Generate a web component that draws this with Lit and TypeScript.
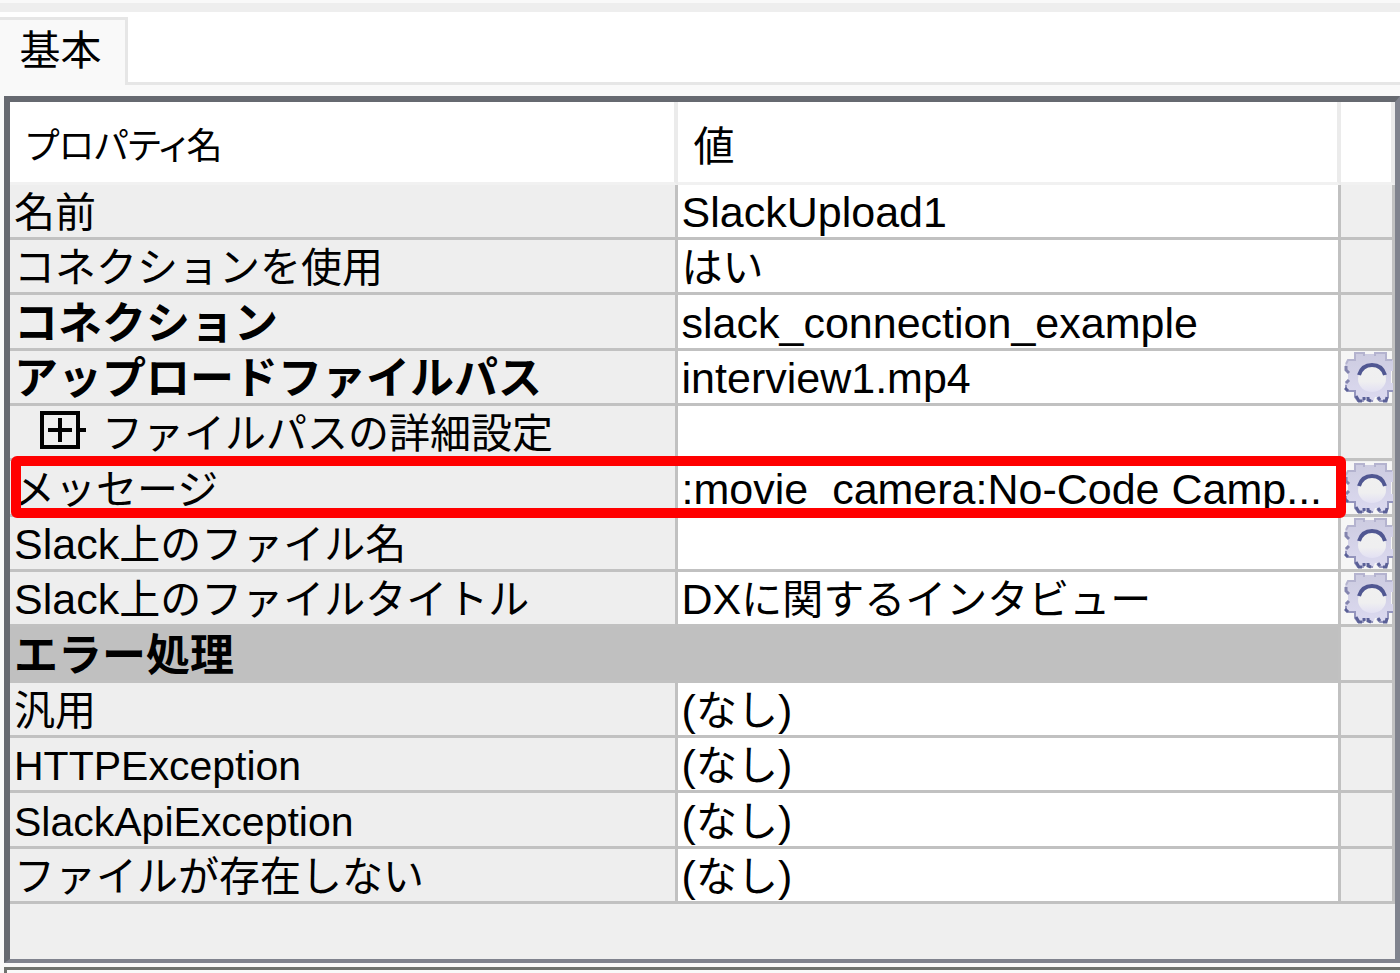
import { LitElement, html, css, svg, nothing } from "lit";
import { customElement, property } from "lit/decorators.js";

interface PropertyRow {
  name: string;
  value?: string;
  required?: boolean;
  child?: boolean;
  section?: boolean;
  gear?: boolean;
  marked?: boolean;
}

const NONE = "(なし)";

const ROWS: PropertyRow[] = [
  { name: "名前", value: "SlackUpload1" },
  { name: "コネクションを使用", value: "はい" },
  { name: "コネクション", value: "slack_connection_example", required: true },
  { name: "アップロードファイルパス", value: "interview1.mp4", required: true, gear: true },
  { name: "ファイルパスの詳細設定", child: true },
  { name: "メッセージ", value: ":movie_camera:No-Code Camp...", gear: true, marked: true },
  { name: "Slack上のファイル名", gear: true },
  { name: "Slack上のファイルタイトル", value: "DXに関するインタビュー", gear: true },
  { name: "エラー処理", section: true },
  { name: "汎用", value: NONE },
  { name: "HTTPException", value: NONE },
  { name: "SlackApiException", value: NONE },
  { name: "ファイルが存在しない", value: NONE },
];

/** Sets Latin runs slightly larger than the Japanese text around them. */
const runs = (text: string) =>
  text
    .split(/([\x20-\x7e]+)/)
    .filter(Boolean)
    .map((part) => (/^[\x20-\x7e]/.test(part) ? html`<span class="latin">${part}</span>` : part));

@customElement("gear-button")
export class GearButton extends LitElement {
  @property() label = "";

  static styles = css`
    :host {
      display: block;
    }
    button {
      display: block;
      width: 100%;
      padding: 0 0 0 3px;
      border: 0;
      background: #f6f6f6;
    }
    svg {
      display: block;
      width: 49px;
      height: 52px;
    }
  `;

  render() {
    return html`<button type="button" aria-label=${this.label}>
      <svg viewBox="0 0 49 52" aria-hidden="true">
        <defs>
          <linearGradient id="body" x1="0" y1="0" x2="0" y2="1">
            <stop offset="0" stop-color="#cccbe0" />
            <stop offset="1" stop-color="#dcdaf0" />
          </linearGradient>
          <linearGradient id="hole" x1="0" y1="0" x2="0" y2="1">
            <stop offset="0" stop-color="#f0f0f0" />
            <stop offset=".6" stop-color="#efeff0" />
            <stop offset="1" stop-color="#e2e0f3" />
          </linearGradient>
        </defs>
        <path
          d="M11 1H20V3H31V1H43V9H49V20H47V32H49V40H44V48L42 51H37L34 46H31L29 51H25L23 47H21L19 51H14L11 46V40H3L1 36V31L4 28V22L1 19V14L4 9H11Z"
          fill="url(#body)"
        />
        <path
          d="M11 10V2H20V5M31 5V2H42V9H48M11 9H4L2 13"
          fill="none"
          stroke="#b4b3cf"
          stroke-width="2"
        />
        <path d="M2 15V19L5 22M5 29L2 32" fill="none" stroke="#8384ae" stroke-width="3" />
        <path
          d="M2 34V38L4 40H11V46L14 50H19L21 47M24 47L26 50H29M33 47L36 50H42L44 46V40H49"
          fill="none"
          stroke="#9495bd"
          stroke-width="2"
        />
        <path
          d="M1 37L4 40M12 45L15 50H18M20 49V46M24 46V49L27 50M34 46L36 49M39 50H42L43 46"
          fill="none"
          stroke="#5a6097"
          stroke-width="3"
        />
        <ellipse cx="28" cy="28" rx="14" ry="13" fill="url(#hole)" />
        <path d="M15 24Q18 14 28 14T41 24" fill="none" stroke="#505792" stroke-width="4" />
      </svg>
    </button>`;
  }
}

@customElement("app-root")
export class AppRoot extends LitElement {
  static styles = css`
    :host {
      display: flex;
      flex-direction: column;
      min-height: 100vh;
      overflow: hidden;
      background: #f9f9f9;
      color: #000;
      font-family: "Noto Sans CJK JP", sans-serif;
      font-size: 41px;
      line-height: 46px;
    }
    .strip {
      height: 9px;
      border-top: 3px solid #f9f9f9;
      background: #eee;
    }
    .tabs {
      display: flex;
      padding-top: 5px;
      background: #fff;
    }
    .tab {
      width: 128px;
      height: 68px;
      box-sizing: border-box;
      padding: 0 4px 12px 0;
      border: 0 solid #e6e6e6;
      border-width: 3px 3px 0 0;
      background: #f9f9f9;
      color: inherit;
      font: inherit;
    }
    .rest {
      flex: 1;
      border-bottom: 3px solid #e6e6e6;
    }
    .frame {
      margin: 11px 0 0 4px;
      padding-bottom: 55px;
      border: solid #666970;
      border-width: 6px 5px 4px 6px;
      border-right-color: #80838e;
      border-bottom-color: #80838e;
      background: #efefef;
    }
    .below {
      flex: 1;
      margin: 4px 0 0 4px;
      border-top: 3px solid #70736f;
      border-left: 3px solid #70736f;
      background: #f9f9f9;
    }
    table {
      width: 100%;
      table-layout: fixed;
      border-collapse: separate;
      border-spacing: 0;
    }
    .names {
      width: 48.2%;
    }
    .tools {
      width: 54px;
    }
    th,
    td {
      box-sizing: border-box;
      padding: 0 0 4px 4px;
      text-align: left;
      font-weight: 400;
      white-space: nowrap;
    }
    thead th {
      height: 83px;
      padding: 2px 0 0 16px;
      border-right: 4px solid #ebebeb;
      border-bottom: 3px solid #f1f1f1;
      background: #fff;
      font-feature-settings: "palt";
    }
    .compact {
      font-size: 36px;
    }
    tbody tr {
      height: 55px;
    }
    tbody tr:nth-child(3n) {
      height: 56px;
    }
    tbody th,
    tbody td {
      border: solid #c1c1c1;
      border-width: 0 3px 3px 0;
      background: #eee;
    }
    tbody .value {
      background: #fff;
    }
    tbody .tool {
      padding: 0;
      background: #efefef;
    }
    .required,
    .section {
      font-size: 44px;
      font-weight: 700;
    }
    tbody .section {
      background: #c0c0c0;
    }
    .child {
      display: flex;
      align-items: center;
      gap: 16px;
      padding-left: 26px;
    }
    .expand {
      padding: 0;
      border: 0;
      background: none;
    }
    .expand svg {
      display: block;
      width: 46px;
      height: 38px;
    }
    .latin {
      font-family: "Liberation Sans", Arial, sans-serif;
      font-size: 43px;
      line-height: 36px;
    }
    .identifier .latin {
      font-size: 41px;
    }
    .marked {
      position: relative;
    }
    .outline {
      position: absolute;
      z-index: 1;
      inset: -5px 49px -1px 1px;
      border: 10px solid #f00;
      border-radius: 6px;
      pointer-events: none;
    }
  `;

  private renderName(row: PropertyRow) {
    if (/^\w+$/.test(row.name)) return html`<span class="identifier">${runs(row.name)}</span>`;
    if (!row.child) return runs(row.name);
    return html`<div class="child">
      <button class="expand" type="button" aria-expanded="false" aria-label=${row.name}>
        <svg viewBox="0 0 46 38" fill="none" stroke="#000" stroke-width="4" aria-hidden="true">
          ${svg`<path d="M2 2H38V36H2ZM8 19H32M20 7V31M38 19H46" />`}
        </svg>
      </button>
      <span>${runs(row.name)}</span>
    </div>`;
  }

  private renderRow(row: PropertyRow) {
    if (row.section) {
      return html`<tr>
        <th class="section" colspan="2" scope="rowgroup">${runs(row.name)}</th>
        <td class="tool"></td>
      </tr>`;
    }
    return html`<tr class=${row.marked ? "marked" : nothing}>
      <th class=${row.required ? "required" : nothing} scope="row">
        ${this.renderName(row)}${row.marked ? html`<div class="outline"></div>` : nothing}
      </th>
      <td class="value">${runs(row.value ?? "")}</td>
      <td class="tool">${row.gear ? html`<gear-button .label=${row.name}></gear-button>` : nothing}</td>
    </tr>`;
  }

  render() {
    return html`
      <div class="strip"></div>
      <div class="tabs" role="tablist">
        <button class="tab" type="button" role="tab" aria-selected="true">基本</button>
        <div class="rest"></div>
      </div>
      <div class="frame">
        <table>
          <colgroup>
            <col class="names" />
            <col />
            <col class="tools" />
          </colgroup>
          <thead>
            <tr>
              <th class="compact" scope="col">プロパティ名</th>
              <th scope="col">値</th>
              <th></th>
            </tr>
          </thead>
          <tbody>
            ${ROWS.map((row) => this.renderRow(row))}
          </tbody>
        </table>
      </div>
      <div class="below"></div>
    `;
  }
}
